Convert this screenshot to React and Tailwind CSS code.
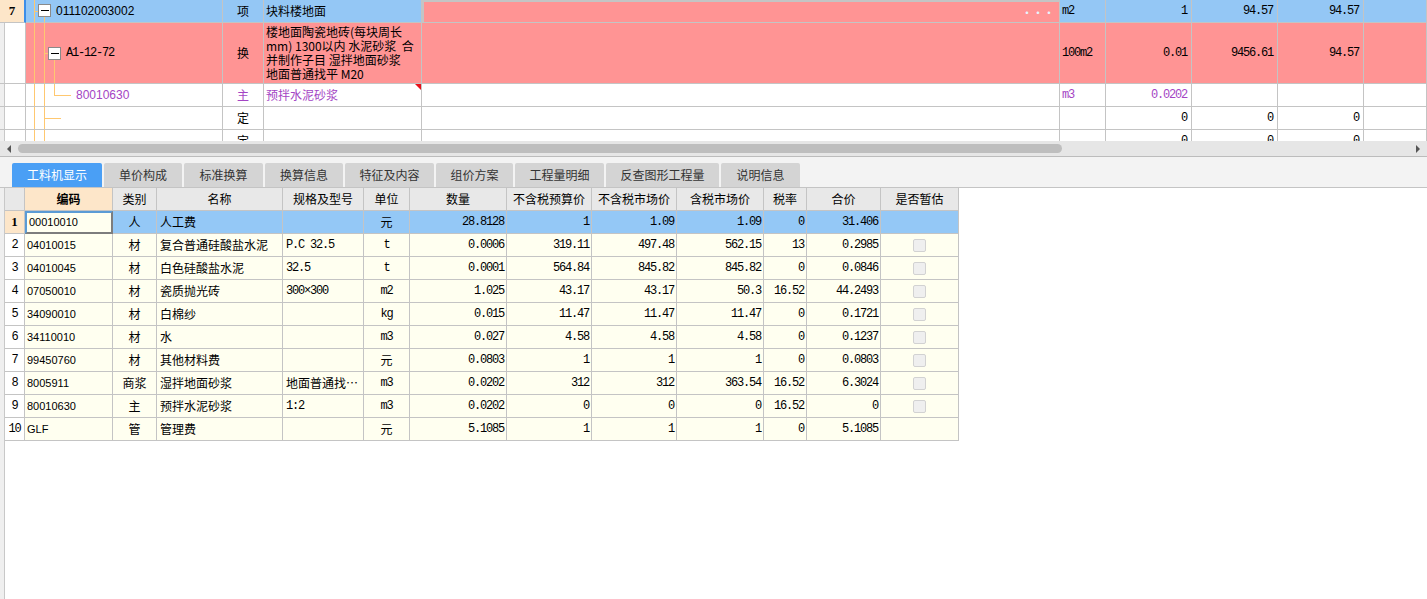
import React from 'react';

const cn = "font-['Noto_Sans_CJK_SC',sans-serif]";
const mono = "font-['Liberation_Mono','Noto_Sans_CJK_SC',monospace] text-[12px] tracking-[-1.2px]";
const sans = "font-['Liberation_Sans',sans-serif] text-[11px]";

const topGrid = "grid grid-cols-[26px_197px_41px_158px_638px_46px_86px_86px_86px_63px]";
const subGrid = "grid grid-cols-[20px_88px_44px_126px_81px_46px_97px_85px_85px_87px_43px_74px_78px]";

const line = "absolute bg-[#ffc870]";

const TreeBox = ({ pos }) => (
  <div className={`absolute ${pos} w-[13px] h-[13px] border border-[#8a8a8a] bg-white flex items-center justify-center`}>
    <div className="w-[8px] h-px bg-black" />
  </div>
);

const Cell = ({ className = '', children }) => (
  <div className={`border-r border-b border-[#c4c4c4] flex items-center overflow-hidden whitespace-nowrap ${className}`}>
    {children}
  </div>
);

const rowNumPlain = "bg-white shadow-[inset_4px_0_0_#efefef,inset_5px_0_0_#c8c8c8]";

const materials = [
  ['00010010', '人', '人工费', '', '元', '28.8128', '1', '1.09', '1.09', '0', '31.406', false],
  ['04010015', '材', '复合普通硅酸盐水泥', 'P.C 32.5', 't', '0.0006', '319.11', '497.48', '562.15', '13', '0.2985', true],
  ['04010045', '材', '白色硅酸盐水泥', '32.5', 't', '0.0001', '564.84', '845.82', '845.82', '0', '0.0846', true],
  ['07050010', '材', '瓷质抛光砖', '300×300', 'm2', '1.025', '43.17', '43.17', '50.3', '16.52', '44.2493', true],
  ['34090010', '材', '白棉纱', '', 'kg', '0.015', '11.47', '11.47', '11.47', '0', '0.1721', true],
  ['34110010', '材', '水', '', 'm3', '0.027', '4.58', '4.58', '4.58', '0', '0.1237', true],
  ['99450760', '材', '其他材料费', '', '元', '0.0803', '1', '1', '1', '0', '0.0803', true],
  ['8005911', '商浆', '湿拌地面砂浆', '地面普通找…', 'm3', '0.0202', '312', '312', '363.54', '16.52', '6.3024', true],
  ['80010630', '主', '预拌水泥砂浆', '1:2', 'm3', '0.0202', '0', '0', '0', '16.52', '0', true],
  ['GLF', '管', '管理费', '', '元', '5.1085', '1', '1', '1', '0', '5.1085', false],
];

const tabs = ['工料机显示', '单价构成', '标准换算', '换算信息', '特征及内容', '组价方案', '工程量明细', '反查图形工程量', '说明信息'];
const tabWidths = ['w-[90px]', 'w-[78px]', 'w-[79px]', 'w-[78px]', 'w-[89px]', 'w-[77px]', 'w-[89px]', 'w-[113px]', 'w-[79px]'];

const isCn = (s) => /[\u4e00-\u9fff元]/.test(s);

const TopGrid = () => (
  <div className={`h-[141px] overflow-hidden text-[12px] ${cn}`}>
    {/* row 7 - 项 */}
    <div className={`${topGrid} h-[23px] bg-[#94c7f5]`}>
      <Cell className="bg-[#fde6c9] justify-center font-bold font-['Liberation_Serif',serif] text-[13px] border-r-2 border-r-[#3d8ee8]">7</Cell>
      <Cell className="relative">
        <div className={`${line} left-[8px] top-0 bottom-0 w-px`} />
        <div className={`${line} left-[8px] top-[11px] w-[4px] h-px`} />
        <TreeBox pos="left-[12px] top-[4px]" />
        <div className={`${line} left-[18px] top-[17px] bottom-0 w-px`} />
        <span className="pl-[30px] font-['Liberation_Sans',sans-serif] text-[12px] text-black">011102003002</span>
      </Cell>
      <Cell className="justify-center">项</Cell>
      <Cell className="pl-[2px]">块料楼地面</Cell>
      <Cell className="bg-[#ff9494] border-2 border-[#7c7c7c] justify-end pr-[4px]">
        <span className="text-[#e6f4ff] text-[10px] tracking-[1px] font-bold">···</span>
      </Cell>
      <Cell className={`pl-[2px] ${mono}`}>m2</Cell>
      <Cell className={`justify-end pr-[4px] ${mono}`}>1</Cell>
      <Cell className={`justify-end pr-[4px] ${mono}`}>94.57</Cell>
      <Cell className={`justify-end pr-[4px] ${mono}`}>94.57</Cell>
      <Cell />
    </div>

    {/* A1-12-72 - 换 */}
    <div className={`${topGrid} h-[61px] bg-[#ff9494]`}>
      <Cell className={rowNumPlain} />
      <Cell className="relative">
        <div className={`${line} left-[8px] top-0 bottom-0 w-px`} />
        <div className={`${line} left-[18px] top-0 bottom-0 w-px`} />
        <div className={`${line} left-[18px] top-[30px] w-[4px] h-px`} />
        <TreeBox pos="left-[22px] top-[24px]" />
        <div className={`${line} left-[28px] top-[37px] bottom-0 w-px`} />
        <span className={`pl-[40px] ${mono} text-black`}>A1-12-72</span>
      </Cell>
      <Cell className="justify-center">换</Cell>
      <Cell className="items-start pl-[2px] pt-[2px]">
        <div className="leading-[14px] whitespace-pre">
          {'楼地面陶瓷地砖(每块周长\nmm) 1300以内 水泥砂浆  合\n并制作子目 湿拌地面砂浆\n地面普通找平 M20'}
        </div>
      </Cell>
      <Cell />
      <Cell className={`pl-[2px] ${mono}`}>100m2</Cell>
      <Cell className={`justify-end pr-[4px] ${mono}`}>0.01</Cell>
      <Cell className={`justify-end pr-[4px] ${mono}`}>9456.61</Cell>
      <Cell className={`justify-end pr-[4px] ${mono}`}>94.57</Cell>
      <Cell />
    </div>

    {/* 80010630 - 主 */}
    <div className={`${topGrid} h-[23px] bg-white text-[#a444c4]`}>
      <Cell className={rowNumPlain} />
      <Cell className="relative">
        <div className={`${line} left-[8px] top-0 bottom-0 w-px`} />
        <div className={`${line} left-[18px] top-0 bottom-0 w-px`} />
        <div className={`${line} left-[28px] top-0 h-[12px] w-px`} />
        <div className={`${line} left-[28px] top-[11px] w-[17px] h-px`} />
        <span className="pl-[50px] font-['Liberation_Sans',sans-serif] text-[12px]">80010630</span>
      </Cell>
      <Cell className="justify-center">主</Cell>
      <Cell className="pl-[2px] relative">
        预拌水泥砂浆
        <div className="absolute right-0 top-0 w-0 h-0 border-t-[6px] border-l-[6px] border-t-[#e8101a] border-l-transparent" />
      </Cell>
      <Cell />
      <Cell className={`pl-[2px] ${mono}`}>m3</Cell>
      <Cell className={`justify-end pr-[4px] ${mono}`}>0.0202</Cell>
      <Cell />
      <Cell />
      <Cell />
    </div>

    {/* 定 rows */}
    {[0, 1].map((i) => (
      <div key={i} className={`${topGrid} h-[23px] bg-white text-black`}>
        <Cell className={rowNumPlain} />
        <Cell className="relative">
          <div className={`${line} left-[8px] top-0 bottom-0 w-px`} />
          <div className={`${line} left-[18px] top-0 bottom-0 w-px`} />
          {i === 0 && <div className={`${line} left-[18px] top-[11px] w-[17px] h-px`} />}
        </Cell>
        <Cell className="justify-center">定</Cell>
        <Cell />
        <Cell />
        <Cell />
        <Cell className={`justify-end pr-[4px] ${mono}`}>0</Cell>
        <Cell className={`justify-end pr-[4px] ${mono}`}>0</Cell>
        <Cell className={`justify-end pr-[4px] ${mono}`}>0</Cell>
        <Cell />
      </div>
    ))}
  </div>
);

const ScrollBar = () => (
  <div className="h-[15px] bg-[#e6e6e6] flex items-center border-b border-[#bcbcbc] box-content">
    <div className="w-[18px] flex justify-center">
      <div className="w-0 h-0 border-y-[4px] border-y-transparent border-r-[4px] border-r-[#555]" />
    </div>
    <div className="w-[1044px] h-[9px] rounded-full bg-[#bebebe]" />
    <div className="flex-1" />
    <div className="w-[18px] flex justify-center">
      <div className="w-0 h-0 border-y-[4px] border-y-transparent border-l-[4px] border-l-[#555]" />
    </div>
  </div>
);

const TabBar = () => (
  <div className="h-[31px] bg-[#f3f3f3] border-b border-[#c4c4c4] flex items-end pl-[12px] gap-[2px]">
    {tabs.map((t, i) => (
      <div
        key={t}
        className={`${tabWidths[i]} h-[24px] rounded-t-[2px] flex items-center justify-center text-[12px] ${cn} ${
          i === 0 ? 'bg-[#4a9ff5] text-white' : 'bg-[#d4d4d4] text-[#333]'
        }`}
      >
        {t}
      </div>
    ))}
  </div>
);

const SubTable = () => {
  const headers = ['', '编码', '类别', '名称', '规格及型号', '单位', '数量', '不含税预算价', '不含税市场价', '含税市场价', '税率', '合价', '是否暂估'];
  return (
    <div className={`w-[954px] text-[12px] text-black ${cn}`}>
      <div className={`${subGrid} h-[23px] bg-[#e8e8e8]`}>
        {headers.map((h, i) => (
          <Cell key={i} className={`justify-center ${i === 1 ? 'bg-[#fde6c9] font-bold' : ''}`}>{h}</Cell>
        ))}
      </div>
      {materials.map((m, idx) => {
        const sel = idx === 0;
        const rowBg = sel ? 'bg-[#94c8f6]' : 'bg-[#fffff0]';
        return (
          <div key={idx} className={`${subGrid} h-[23px] ${rowBg}`}>
            <Cell className={`justify-center ${sel ? "bg-[#fde6c9] font-bold font-['Liberation_Serif',serif] text-[13px]" : `bg-white ${mono}`}`}>
              {idx + 1}
            </Cell>
            <Cell className={`pl-[2px] ${sans} ${sel ? 'bg-[#fffff0] border-t-2 border-l-2 border-t-[#5b9bd5] border-l-[#5b9bd5] border-r-2 border-b-2 border-r-[#7d7d7d] border-b-[#7d7d7d]' : ''}`}>
              {m[0]}
            </Cell>
            <Cell className="justify-center">{m[1]}</Cell>
            <Cell className="pl-[3px]">{m[2]}</Cell>
            <Cell className={`pl-[3px] ${isCn(m[3]) ? '' : mono}`}>{m[3]}</Cell>
            <Cell className={`justify-center ${isCn(m[4]) ? '' : mono}`}>{m[4]}</Cell>
            {m.slice(5, 11).map((v, j) => (
              <Cell key={j} className={`justify-end pr-[2px] ${mono}`}>{v}</Cell>
            ))}
            <Cell className="justify-center">
              {m[11] && <div className="w-[13px] h-[13px] rounded-[2px] border border-[#d2d2d2] bg-[#efefef]" />}
            </Cell>
          </div>
        );
      })}
    </div>
  );
};

export default function App() {
  return (
    <div className="w-[1427px] h-[599px] overflow-hidden bg-white flex flex-col">
      <TopGrid />
      <ScrollBar />
      <TabBar />
      <div className="flex-1 flex bg-white">
        <div className="w-[5px] bg-[#efefef] border-r border-[#c8c8c8]" />
        <SubTable />
      </div>
    </div>
  );
}
